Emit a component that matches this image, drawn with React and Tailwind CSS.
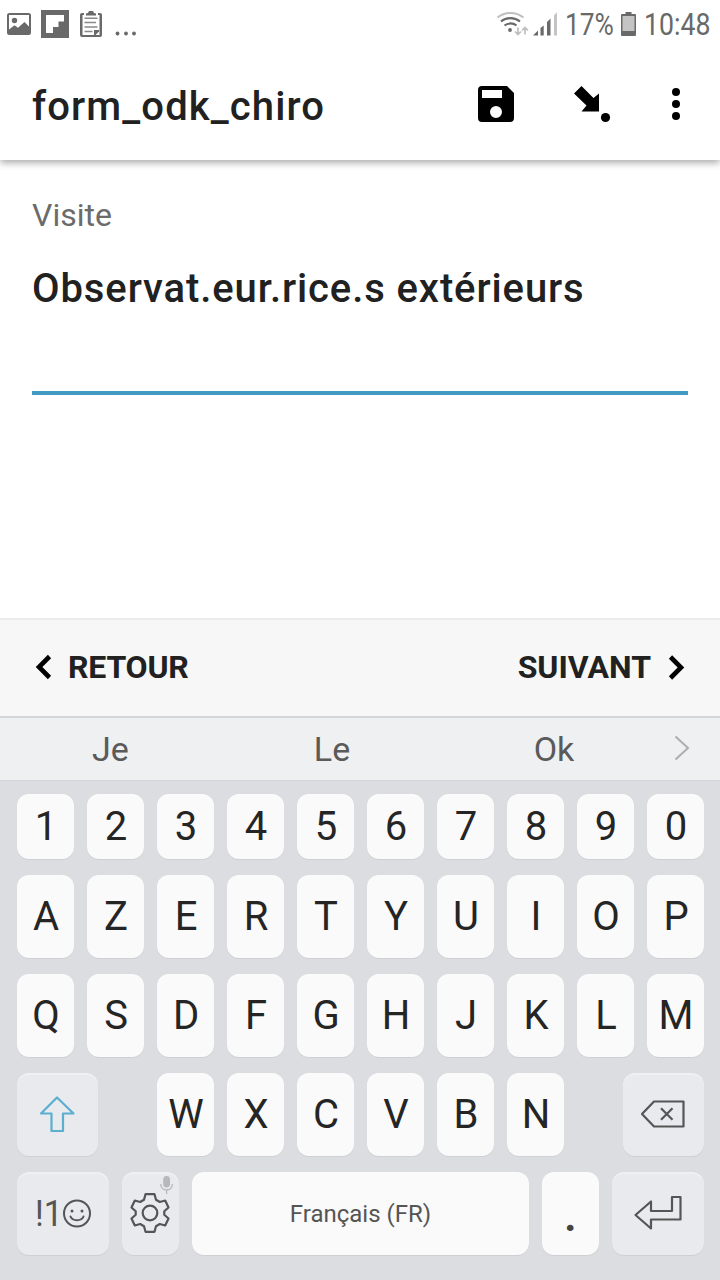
import React from "react";

const keyBase =
  "flex shrink-0 items-center justify-center rounded-[12px] shadow-[0_1px_0_#cfd0d4,inset_0_2px_0_rgba(255,255,255,0.3)]";

function Key({ children, size = "h-[83px] w-[57px]", tone = "bg-[#fafafa]" }) {
  return (
    <button className={`${keyBase} ${size} ${tone} text-[40px] leading-none text-[#252525]`}>
      {children}
    </button>
  );
}

function KeyRow({ keys, size }) {
  return (
    <div className="flex gap-[13px]">
      {keys.split("").map((k) => (
        <Key key={k} size={size}>
          <span className="pl-px">{k}</span>
        </Key>
      ))}
    </div>
  );
}

function StatusBar() {
  return (
    <div className="relative z-20 flex h-12 justify-between bg-white text-[#696969]">
      <svg width="150" height="48" viewBox="0 0 150 48" fill="#696969">
        <path fillRule="evenodd" d="M9.500 13h19a2.500 2.500 0 0 1 2.500 2.500v17a2.500 2.500 0 0 1-2.500 2.500h-19A2.500 2.500 0 0 1 7 32.500v-17A2.500 2.500 0 0 1 9.500 13ZM9 15v14.500l5.500-4.200 3.500 2.500 6.500-5.800 4.500 4.500V15Z" />
        <circle cx="14.500" cy="20.500" r="2.700" />
        <path fillRule="evenodd" d="M41 10h28v28H41ZM46 15v18h7v-6h5.500v-5.500H64V15Z" />
        <path fillRule="evenodd" d="M82 13h18a2 2 0 0 1 2 2v20a2 2 0 0 1-2 2H82a2 2 0 0 1-2-2V15a2 2 0 0 1 2-2ZM82.500 15v20h17V15Z" />
        <path d="M84 13h14v3H84Z" fill="#fff" />
        <path d="M86 15.500v-2l2-.5 1-2h4l1 2 2 .5v2Z" />
        <path d="M84.500 18.200h13M84.500 22.500h11.500M84.500 27h13M84.500 31.500h8" fill="none" stroke="#898989" strokeWidth="1.400" />
        <path d="M94 30h5v1.500L95.500 35H94Z" />
        <circle cx="117.500" cy="33.500" r="1.900" />
        <circle cx="126" cy="33.500" r="1.900" />
        <circle cx="134" cy="33.500" r="1.900" />
      </svg>
      <div className="flex items-center pr-2">
        <svg width="70" height="48" viewBox="490 0 70 48" fill="none">
          <g strokeWidth="2.200">
            <path d="M496.500 17.500C504 11.500 515 11.500 522.500 17.500" stroke="#bfbfbf" />
            <path d="M500 21.500C505.500 17 513.500 17 519 21.500M503.500 25.500C507 22.800 512 22.800 515.500 25.500" stroke="#696969" />
          </g>
          <circle cx="509" cy="30" r="1.900" fill="#696969" />
          <path d="M517 27.500V34M514 31.500l3 3 3-3M524 34.500V28M521 30.500l3-3 3 3" stroke="#bfbfbf" strokeWidth="1.700" />
          <path d="M532 35.500 537 30.500V35.500ZM539.500 28 542.700 25.500V35.500H539.500ZM546 22 549.500 18.500V35.500H546Z" fill="#696969" />
          <path d="M553 15.200 556 12.200V35.500H553Z" fill="#c4c4c4" />
        </svg>
        <span className="ml-[4px] w-[50px] whitespace-nowrap pt-px text-[31px] leading-none">
          <span className="inline-block origin-left scale-x-[0.85]">17%</span>
        </span>
        <svg className="ml-[5px]" width="17" height="48" viewBox="619.500 0 17 48">
          <path d="M625 12h6v2h3.500a1 1 0 0 1 1 1v20a1 1 0 0 1-1 1h-13a1 1 0 0 1-1-1V15a1 1 0 0 1 1-1H625Z" fill="#696969" />
          <path d="M622 16h12v15h-12Z" fill="#c4c4c4" />
        </svg>
        <span className="ml-[7px] w-[68px] whitespace-nowrap pt-px text-[31px] leading-none">
          <span className="inline-block origin-left scale-x-[0.86]">10:48</span>
        </span>
      </div>
    </div>
  );
}

function AppBar() {
  return (
    <header className="z-10 flex h-28 items-center justify-between bg-white pl-8 shadow-[0_3px_7px_rgba(0,0,0,0.33)]">
      <h1 className="pt-[6px] text-[40px] font-medium leading-none tracking-[1.120px] text-[#212121]">form_odk_chiro</h1>
      <svg width="260" height="112" viewBox="460 48 260 112" fill="#000">
        <path fillRule="evenodd" d="M482 86h25l7 7v25a4 4 0 0 1-4 4h-28a4 4 0 0 1-4-4V90a4 4 0 0 1 4-4ZM482 90v8h20v-8ZM496 106a6 6 0 1 0 0 12a6 6 0 0 0 0-12Z" />
        <path d="M581.500 86 593.500 98 599 93.500V111.500H581.500L586.500 105.500 574 93.500Z" />
        <circle cx="605.500" cy="117.500" r="4.600" />
        <circle cx="676" cy="92" r="4" />
        <circle cx="676" cy="104" r="4" />
        <circle cx="676" cy="116" r="4" />
      </svg>
    </header>
  );
}

function Keyboard() {
  return (
    <section className="flex h-[564px] flex-col bg-[#dcdde1]">
      <div className="flex h-[65px] items-center border-t-2 border-b border-t-[#d5d6d8] border-b-[#d4d5d9] bg-[#eff0f2] text-[34px] leading-none text-[#5a5a5a]">
        <span className="w-[221px] text-center">Je</span>
        <span className="w-[222px] text-center">Le</span>
        <span className="w-[222px] text-center">Ok</span>
        <svg className="ml-[7px]" width="20" height="28" viewBox="672 735 20 28" fill="none" stroke="#adaeb0" strokeWidth="2">
          <path d="M675.500 736.500 688 748 675.500 759.500" />
        </svg>
      </div>
      <div className="flex flex-col gap-4 px-[17px] pt-[13px]">
        <KeyRow keys="1234567890" size="h-[65px] w-[57px]" />
        <KeyRow keys="AZERTYUIOP" />
        <KeyRow keys="QSDFGHJKLM" />
        <div className="flex w-[687px] justify-between">
          <Key size="h-[83px] w-[81px]" tone="bg-[#e9eaee]">
            <svg width="81" height="83" viewBox="17 1073 81 83" fill="none" stroke="#5aafd0" strokeWidth="2.200" strokeLinejoin="round">
              <path d="M57 1097.500 73.500 1113.500H63V1131H51.500V1113.500H41Z" />
            </svg>
          </Key>
          <KeyRow keys="WXCVBN" />
          <Key size="h-[83px] w-[81px]" tone="bg-[#e9eaee]">
            <svg width="81" height="83" viewBox="623 1073 81 83" fill="none" stroke="#555" strokeWidth="2.200" strokeLinejoin="round">
              <path d="M654 1101.500H683.500V1126.500H654L642 1114Z" />
              <path d="M661 1108.200 672.500 1119.700M672.500 1108.200 661 1119.700" />
            </svg>
          </Key>
        </div>
        <div className="flex gap-[13px]">
          <Key size="h-[83px] w-[92px]" tone="bg-[#e9eaee]">
            <span className="flex items-center text-[36px] text-[#555]">
              <span className="inline-block w-[27px] whitespace-nowrap">
                <span className="inline-block origin-left scale-x-[0.94]">!1</span>
              </span>
              <svg width="30" height="30" viewBox="0 0 30 30" fill="none" stroke="#555" strokeWidth="2">
                <circle cx="15" cy="14.500" r="13" />
                <path d="M8.500 17.500c2 5 11 5 13 0" strokeLinecap="round" />
                <circle cx="10" cy="12" r="1.500" fill="#555" stroke="none" />
                <circle cx="20" cy="12" r="1.500" fill="#555" stroke="none" />
              </svg>
            </span>
          </Key>
          <Key tone="bg-[#e9eaee]">
            <svg width="57" height="83" viewBox="122 1172 57 83" fill="none" stroke="#555" strokeWidth="2.200" strokeLinejoin="round">
              <circle cx="150" cy="1213" r="7.300" />
              <path d="M145.500 1194.200H154.500L156 1199.800 159.800 1202 165.200 1200.500 168.500 1207.500 164.300 1211.300V1214.700L168.500 1218.500 165.200 1225.500 159.800 1224 156 1226.200 154.500 1231.800H145.500L144 1226.200 140.200 1224 134.800 1225.500 131.500 1218.500 135.700 1214.700V1211.300L131.500 1207.500 134.800 1200.500 140.200 1202 144 1199.800Z" />
              <rect x="163.200" y="1176" width="6.800" height="11.500" rx="3.400" fill="#b7b8bb" stroke="none" />
              <path d="M160.800 1184c0 8 11.500 8 11.500 0M166.600 1190v4" stroke="#b7b8bb" strokeWidth="1.300" />
            </svg>
          </Key>
          <Key size="h-[83px] w-[337px]">
            <span className="text-2xl text-[#555]">Français (FR)</span>
          </Key>
          <Key>
            <span className="pt-[3px] text-[48px] font-medium text-[#444]">.</span>
          </Key>
          <Key size="h-[83px] w-[92px]" tone="bg-[#e9eaee]">
            <svg width="92" height="83" viewBox="612 1172 92 83" fill="none" stroke="#555" strokeWidth="2.200" strokeLinejoin="round">
              <path d="M635.500 1215 651 1201.500V1211H672V1197H680.500V1219.500H651V1228.500Z" />
            </svg>
          </Key>
        </div>
      </div>
    </section>
  );
}

export default function App() {
  return (
    <div className="flex h-[1280px] w-[720px] flex-col overflow-hidden bg-white font-['Roboto',sans-serif]">
      <StatusBar />
      <AppBar />
      <main className="flex-1 px-8 pt-[39px]">
        <p className="text-[32px] leading-[32px] text-[#6b6b6b]">Visite</p>
        <h2 className="mt-[38px] whitespace-nowrap text-[40px] font-medium leading-[40px] tracking-[0.900px] text-[#212121]">
          Observat.eur.rice.s extérieurs
        </h2>
        <div className="mt-[82px] h-1 bg-[#419bc5]" />
      </main>
      <nav className="flex h-[98px] items-center justify-between border-t-2 border-[#ebebeb] bg-[#f7f7f7] px-8 pb-[2px] text-[32px] font-bold leading-none text-[#212121]">
        <button className="flex items-center gap-[12px] tracking-[-0.200px]">
          <svg width="24" height="28" viewBox="32 653 24 28" fill="none" stroke="#000" strokeWidth="4.600">
            <path d="M49.500 656.500 39 667 49.500 677.500" />
          </svg>
          RETOUR
        </button>
        <button className="flex items-center gap-[13px]">
          SUIVANT
          <svg width="24" height="28" viewBox="664 653 24 28" fill="none" stroke="#000" strokeWidth="4.600">
            <path d="M670.500 657 681 667.500 670.500 678" />
          </svg>
        </button>
      </nav>
      <Keyboard />
    </div>
  );
}
